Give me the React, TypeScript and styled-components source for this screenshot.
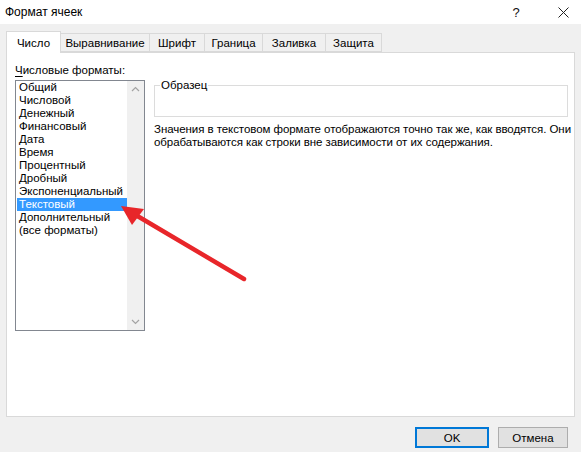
import React from "react";
import styled, { createGlobalStyle } from "styled-components";

const GlobalStyle = createGlobalStyle`
  body {
    margin: 0;
    font-family: "Liberation Sans", Arial, sans-serif;
    font-size: 11.5px;
    color: #000;
  }
`;

const Dialog = styled.div`
  position: relative;
  width: 581px;
  height: 452px;
  background: #f0f0f0;
  display: flex;
  flex-direction: column;
  overflow: hidden;
`;

const TitleBar = styled.div`
  height: 24px;
  background: #fff;
  display: flex;
  align-items: center;
  padding-left: 5px;
  font-size: 12px;
`;

const Title = styled.div`
  flex: 1;
`;

const TitleButtons = styled.div`
  display: flex;
  gap: 6px;
`;

const TitleButton = styled.div<{ $w: number }>`
  width: ${(p) => p.$w}px;
  height: 24px;
  display: flex;
  align-items: center;
  justify-content: center;
  font-size: 13px;
  color: #111;
`;

const Body = styled.div`
  padding: 7px 6px 0 6px;
  display: flex;
  flex-direction: column;
`;

const TabStrip = styled.div`
  display: flex;
  align-items: flex-end;
  height: 21px;
`;

const Tab = styled.div<{ $active?: boolean; $w: number }>`
  width: ${(p) => p.$w}px;
  box-sizing: border-box;
  height: ${(p) => (p.$active ? 22 : 19)}px;
  margin-bottom: ${(p) => (p.$active ? -1 : 0)}px;
  border: 1px solid #d9d9d9;
  border-bottom: ${(p) => (p.$active ? "none" : "1px solid #d9d9d9")};
  border-left: ${(p) => (p.$active ? "1px solid #d9d9d9" : "none")};
  background: ${(p) => (p.$active ? "#fff" : "#f0f0f0")};
  display: flex;
  align-items: center;
  justify-content: center;
  position: relative;
  z-index: ${(p) => (p.$active ? 1 : 0)};
  padding-top: ${(p) => (p.$active ? 1 : 0)}px;
`;

const Panel = styled.div`
  height: 365px;
  box-sizing: border-box;
  background: #fff;
  border: 1px solid #d9d9d9;
  display: grid;
  grid-template-columns: 130px minmax(0, 1fr);
  column-gap: 9px;
  padding: 11px 6px 0 8px;
`;

const LeftCol = styled.div`
  display: flex;
  flex-direction: column;
`;

const FieldLabel = styled.div`
  height: 16px;
  line-height: 13px;
  u {
    text-decoration: underline;
    text-underline-offset: 2px;
  }
`;

const ListBox = styled.div`
  height: 251px;
  box-sizing: border-box;
  border: 1px solid #828790;
  display: flex;
`;

const Items = styled.div`
  flex: 1;
  min-width: 0;
  overflow: hidden;
  padding-left: 1px;
`;

const Item = styled.div<{ $selected?: boolean }>`
  height: 13px;
  line-height: 13px;
  padding-left: 2px;
  white-space: nowrap;
  background: ${(p) => (p.$selected ? "#3399ff" : "transparent")};
  color: ${(p) => (p.$selected ? "#fff" : "#000")};
`;

const ScrollBar = styled.div`
  width: 17px;
  flex-shrink: 0;
  background: #f0f0f0;
  display: flex;
  flex-direction: column;
  justify-content: space-between;
  align-items: center;
  padding: 5px 0;
`;

const RightCol = styled.div`
  display: flex;
  flex-direction: column;
  padding-top: 21px;
  min-width: 0;
`;

const SampleBox = styled.div`
  position: relative;
  height: 32px;
  box-sizing: border-box;
  border: 1px solid #dcdcdc;
`;

const SampleLegend = styled.span`
  position: absolute;
  top: -7px;
  left: 5px;
  background: #fff;
  line-height: 13px;
  padding: 0 1px;
`;

const Description = styled.div`
  margin-top: 6px;
  line-height: 13px;
  white-space: nowrap;
  letter-spacing: -0.06px;
`;

const ButtonRow = styled.div`
  display: flex;
  justify-content: flex-end;
  gap: 9px;
  padding: 10px 7px 0 0;
`;

const Button = styled.div<{ $primary?: boolean; $w: number }>`
  width: ${(p) => p.$w}px;
  height: 21px;
  box-sizing: border-box;
  background: #e1e1e1;
  border: ${(p) => (p.$primary ? "2px solid #0078d7" : "1px solid #adadad")};
  display: flex;
  align-items: center;
  justify-content: center;
`;

const ArrowLayer = styled.svg`
  position: absolute;
  left: 0;
  top: 0;
  pointer-events: none;
`;

const formats = [
  "Общий",
  "Числовой",
  "Денежный",
  "Финансовый",
  "Дата",
  "Время",
  "Процентный",
  "Дробный",
  "Экспоненциальный",
  "Текстовый",
  "Дополнительный",
  "(все форматы)",
];

const tabs: [string, number][] = [
  ["Число", 55],
  ["Выравнивание", 89],
  ["Шрифт", 55],
  ["Граница", 58],
  ["Заливка", 63],
  ["Защита", 56],
];

function Chevron({ up }: { up?: boolean }) {
  return (
    <svg width="9" height="6" viewBox="0 0 9 6">
      <path
        d={up ? "M1 5 L4.5 1.5 L8 5" : "M1 1 L4.5 4.5 L8 1"}
        fill="none"
        stroke="#a3a3a3"
        strokeWidth="1.2"
      />
    </svg>
  );
}

export default function App() {
  return (
    <>
      <GlobalStyle />
      <Dialog>
        <TitleBar>
          <Title>Формат ячеек</Title>
          <TitleButtons>
            <TitleButton $w={46}>?</TitleButton>
            <TitleButton $w={36}>
              <svg width="11" height="11" viewBox="0 0 11 11">
                <path d="M0.5 0.5 L10.5 10.5 M10.5 0.5 L0.5 10.5" stroke="#222" strokeWidth="1" />
              </svg>
            </TitleButton>
          </TitleButtons>
        </TitleBar>
        <Body>
          <TabStrip>
            {tabs.map(([t, w], i) => (
              <Tab key={t} $w={w} $active={i === 0}>
                {t}
              </Tab>
            ))}
          </TabStrip>
          <Panel>
            <LeftCol>
              <FieldLabel>
                <u>Ч</u>исловые форматы:
              </FieldLabel>
              <ListBox>
                <Items>
                  {formats.map((f) => (
                    <Item key={f} $selected={f === "Текстовый"}>
                      {f}
                    </Item>
                  ))}
                </Items>
                <ScrollBar>
                  <Chevron up />
                  <Chevron />
                </ScrollBar>
              </ListBox>
            </LeftCol>
            <RightCol>
              <SampleBox>
                <SampleLegend>Образец</SampleLegend>
              </SampleBox>
              <Description>
                Значения в текстовом формате отображаются точно так же, как вводятся. Они
                <br />
                обрабатываются как строки вне зависимости от их содержания.
              </Description>
            </RightCol>
          </Panel>
          <ButtonRow>
            <Button $primary $w={74}>OK</Button>
            <Button $w={70}>Отмена</Button>
          </ButtonRow>
        </Body>
        <ArrowLayer width="581" height="452">
          <line x1="244" y1="279" x2="134" y2="214" stroke="#e8262a" strokeWidth="4.5" strokeLinecap="round" />
          <polygon points="121,206 144,209 132,225" fill="#e8262a" />
        </ArrowLayer>
      </Dialog>
    </>
  );
}
